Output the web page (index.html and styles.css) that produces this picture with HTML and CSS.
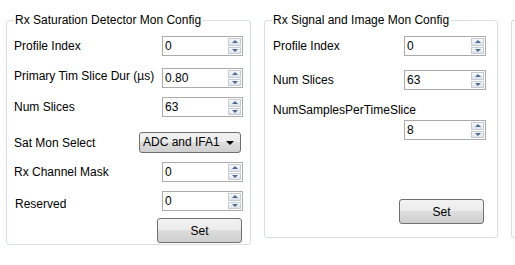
FILE: index.html
```html
<!DOCTYPE html>
<html>
<head>
<meta charset="utf-8">
<link rel="stylesheet" href="styles.css">
</head>
<body>
<div class="panels">
  <div class="group group-sat">
    <div class="group-title">Rx Saturation Detector Mon Config</div>
    <div class="row r1"><span class="label">Profile Index</span><div class="spin"><span class="val">0</span><span class="btns"><span class="up"></span><span class="dn"></span></span></div></div>
    <div class="row r2"><span class="label lab-up">Primary Tim Slice Dur (µs)</span><div class="spin"><span class="val">0.80</span><span class="btns"><span class="up"></span><span class="dn"></span></span></div></div>
    <div class="row r3"><span class="label">Num Slices</span><div class="spin"><span class="val">63</span><span class="btns"><span class="up"></span><span class="dn"></span></span></div></div>
    <div class="row r4"><span class="label lab-combo">Sat Mon Select</span><div class="combo"><span class="combo-text">ADC and IFA1</span><span class="caret"></span></div></div>
    <div class="row r5"><span class="label lab-mask">Rx Channel Mask</span><div class="spin"><span class="val">0</span><span class="btns"><span class="up"></span><span class="dn"></span></span></div></div>
    <div class="row r6"><span class="label lab-in">Reserved</span><div class="spin"><span class="val">0</span><span class="btns"><span class="up"></span><span class="dn"></span></span></div></div>
    <div class="row rb"><button class="btn">Set</button></div>
  </div>
  <div class="group group-sig">
    <div class="group-title">Rx Signal and Image Mon Config</div>
    <div class="row s1"><span class="label">Profile Index</span><div class="spin"><span class="val">0</span><span class="btns"><span class="up"></span><span class="dn"></span></span></div></div>
    <div class="row s2"><span class="label">Num Slices</span><div class="spin"><span class="val">63</span><span class="btns"><span class="up"></span><span class="dn"></span></span></div></div>
    <div class="row s3"><span class="label">NumSamplesPerTimeSlice</span></div>
    <div class="row s4"><div class="spin"><span class="val">8</span><span class="btns"><span class="up"></span><span class="dn"></span></span></div></div>
    <div class="row sb"><button class="btn">Set</button></div>
  </div>
  <div class="group group-next"></div>
</div>
</body>
</html>
```
FILE: styles.css
```css
html, body {
  margin: 0;
  padding: 0;
  background: #ffffff;
}
body {
  font-family: "Liberation Sans", Arial, sans-serif;
  font-size: 12px;
  color: #000000;
  width: 515px;
  height: 265px;
  overflow: hidden;
}
.panels {
  display: flex;
  align-items: flex-start;
  padding: 20px 0 0 6px;
  gap: 13px;
}
.group {
  position: relative;
  border: 1px solid #d5dfe5;
  border-radius: 3px;
  box-sizing: border-box;
  flex: none;
  display: flex;
  flex-direction: column;
}
.group-title {
  position: absolute;
  top: -8px;
  left: 7px;
  padding: 0 2px 0 1px;
  background: #ffffff;
  line-height: 14px;
  white-space: nowrap;
}
.group-sat {
  width: 245px;
  height: 225px;
  padding: 15px 7px 0 7px;
}
.group-sig {
  width: 234px;
  height: 218px;
  padding: 15px 11px 0 8px;
}
.group-next {
  width: 4px;
  height: 218px;
  border-right: none;
  border-radius: 3px 0 0 3px;
}
.row {
  display: flex;
  align-items: flex-start;
  justify-content: space-between;
  flex: none;
}
.label {
  line-height: 20px;
  white-space: nowrap;
}
.lab-up { line-height: 16px; }
.lab-combo { line-height: 22px; }
.lab-mask { line-height: 21px; }
.lab-in { padding-left: 1px; line-height: 26px; }
.r1 { height: 32px; }
.r2 { height: 29px; }
.r3 { height: 35px; }
.r4 { height: 30px; }
.r5 { height: 29px; }
.r6 { height: 27px; }
.rb { justify-content: flex-end; }
.rb .btn { margin-right: 1px; }
.s1 { height: 34px; }
.s2 { height: 33px; }
.s3 { height: 17px; }
.s3 .label { line-height: 14px; }
.s4 { height: 79px; justify-content: flex-end; }
.sb { justify-content: flex-end; }
.sb .btn { margin-right: 2px; }
.group-sig .spin { width: 82px; }

.spin {
  position: relative;
  width: 81px;
  height: 20px;
  box-sizing: border-box;
  border: 1px solid #ababab;
  background: #ffffff;
  display: flex;
  align-items: center;
  flex: none;
}
.val {
  padding-left: 2px;
  line-height: 18px;
  flex: 1;
}
.btns {
  display: flex;
  flex-direction: column;
  gap: 1px;
  margin: 1px 1px 1px 0;
  width: 13px;
  align-self: stretch;
}
.up, .dn {
  flex: 1;
  box-sizing: border-box;
  border: 1px solid #c5ccd4;
  background: linear-gradient(#f7f8fa, #dfe4ea);
  display: flex;
  align-items: center;
  justify-content: center;
}
.up::after {
  content: "";
  border-left: 3px solid transparent;
  border-right: 3px solid transparent;
  border-bottom: 3px solid #4d6a96;
}
.dn::after {
  content: "";
  border-left: 3px solid transparent;
  border-right: 3px solid transparent;
  border-top: 3px solid #4d6a96;
}
.combo {
  width: 102px;
  height: 21px;
  box-sizing: border-box;
  border: 1px solid #707070;
  border-radius: 3px;
  background: linear-gradient(#f2f2f2 0%, #ebebeb 50%, #dddddd 50%, #cfcfcf 100%);
  display: flex;
  align-items: center;
  padding: 0 6px 0 3px;
  margin-right: 2px;
  flex: none;
}
.combo-text {
  flex: 1;
  line-height: 19px;
}
.caret {
  border-left: 4px solid transparent;
  border-right: 4px solid transparent;
  border-top: 4px solid #000000;
}
.btn {
  width: 85px;
  height: 25px;
  border: 1px solid #707070;
  border-radius: 3px;
  background: linear-gradient(#f2f2f2 0%, #ebebeb 50%, #dddddd 50%, #cfcfcf 100%);
  font-family: "Liberation Sans", Arial, sans-serif;
  font-size: 12px;
  color: #000000;
  padding: 0;
  margin: 0;
}
```
